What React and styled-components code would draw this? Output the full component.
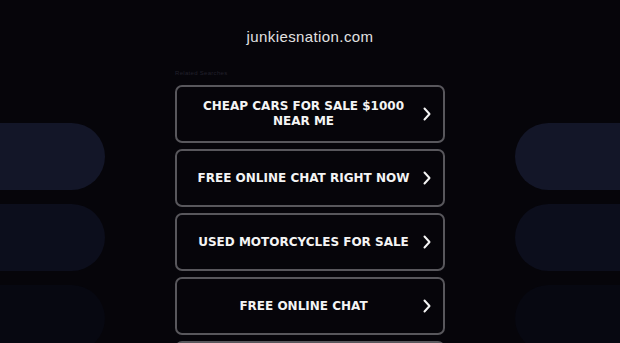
import React from "react";
import styled, { createGlobalStyle } from "styled-components";

const Global = createGlobalStyle`
  html, body { margin: 0; padding: 0; background: #06050a; }
  body { font-family: "DejaVu Sans", sans-serif; overflow: hidden; }
`;

const Page = styled.div`
  width: 620px;
  height: 343px;
  overflow: hidden;
  display: grid;
  grid-template-columns: 105px 1fr 270px 1fr 105px;
  background: #06050a;
`;

const Side = styled.div`
  grid-column: ${(p) => (p.$side === "left" ? 1 : 5)};
  grid-row: 1;
  display: flex;
  flex-direction: column;
  gap: 14px;
  padding-top: 123px;
`;

const Pill = styled.div`
  height: 67px;
  flex-shrink: 0;
  background: ${(p) => p.$bg};
  border-radius: ${(p) => (p.$side === "left" ? "0 34px 34px 0" : "34px 0 0 34px")};
`;

const Center = styled.div`
  grid-column: 3;
  grid-row: 1;
  display: flex;
  flex-direction: column;
`;

const Title = styled.h1`
  margin: 27px -70px 0;
  font-family: "Liberation Sans", Arial, sans-serif;
  font-weight: 400;
  font-size: 15px;
  line-height: 20px;
  letter-spacing: 0.4px;
  color: #e2e2e2;
  text-align: center;
`;

const Related = styled.div`
  margin-top: 22px;
  font-family: "Liberation Sans", Arial, sans-serif;
  font-size: 6px;
  line-height: 8px;
  color: #22212c;
  letter-spacing: 0.3px;
`;

const List = styled.div`
  margin-top: 8px;
  display: flex;
  flex-direction: column;
  gap: 6px;
`;

const Item = styled.a`
  box-sizing: border-box;
  height: 58px;
  flex-shrink: 0;
  border: 2px solid #58575c;
  border-radius: 7px;
  display: flex;
  align-items: center;
  padding: 0 11px 0 10px;
  color: #f4f4f4;
  text-decoration: none;
`;

const Label = styled.span`
  flex: 1;
  text-align: center;
  font-family: "DejaVu Sans", sans-serif;
  font-weight: 700;
  font-size: 12px;
  line-height: 15px;
  letter-spacing: 0;
  text-transform: uppercase;
  padding: 0 2px 0 0;
`;

const Chevron = () => (
  <svg width="10" height="14" viewBox="0 0 10 14" style={{ flexShrink: 0 }}>
    <path d="M2.5 1.5 L7.5 7 L2.5 12.5" fill="none" stroke="#f4f4f4" strokeWidth="2" strokeLinecap="round" strokeLinejoin="round" />
  </svg>
);

const items = [
  "Cheap Cars For Sale $1000 Near Me",
  "Free Online Chat Right Now",
  "Used Motorcycles For Sale",
  "Free Online Chat",
  "Cheap Used Cars",
];

const pills = ["#131628", "#0c0e1c", "#070811"];

export default function App() {
  return (
    <>
      <Global />
      <Page>
        <Side $side="left">
          {pills.map((c, i) => (
            <Pill key={i} $bg={c} $side="left" />
          ))}
        </Side>
        <Center>
          <Title>junkiesnation.com</Title>
          <Related>Related Searches</Related>
          <List>
            {items.map((t) => (
              <Item key={t} href="#">
                <Label>{t}</Label>
                <Chevron />
              </Item>
            ))}
          </List>
        </Center>
        <Side $side="right">
          {pills.map((c, i) => (
            <Pill key={i} $bg={c} $side="right" />
          ))}
        </Side>
      </Page>
    </>
  );
}
